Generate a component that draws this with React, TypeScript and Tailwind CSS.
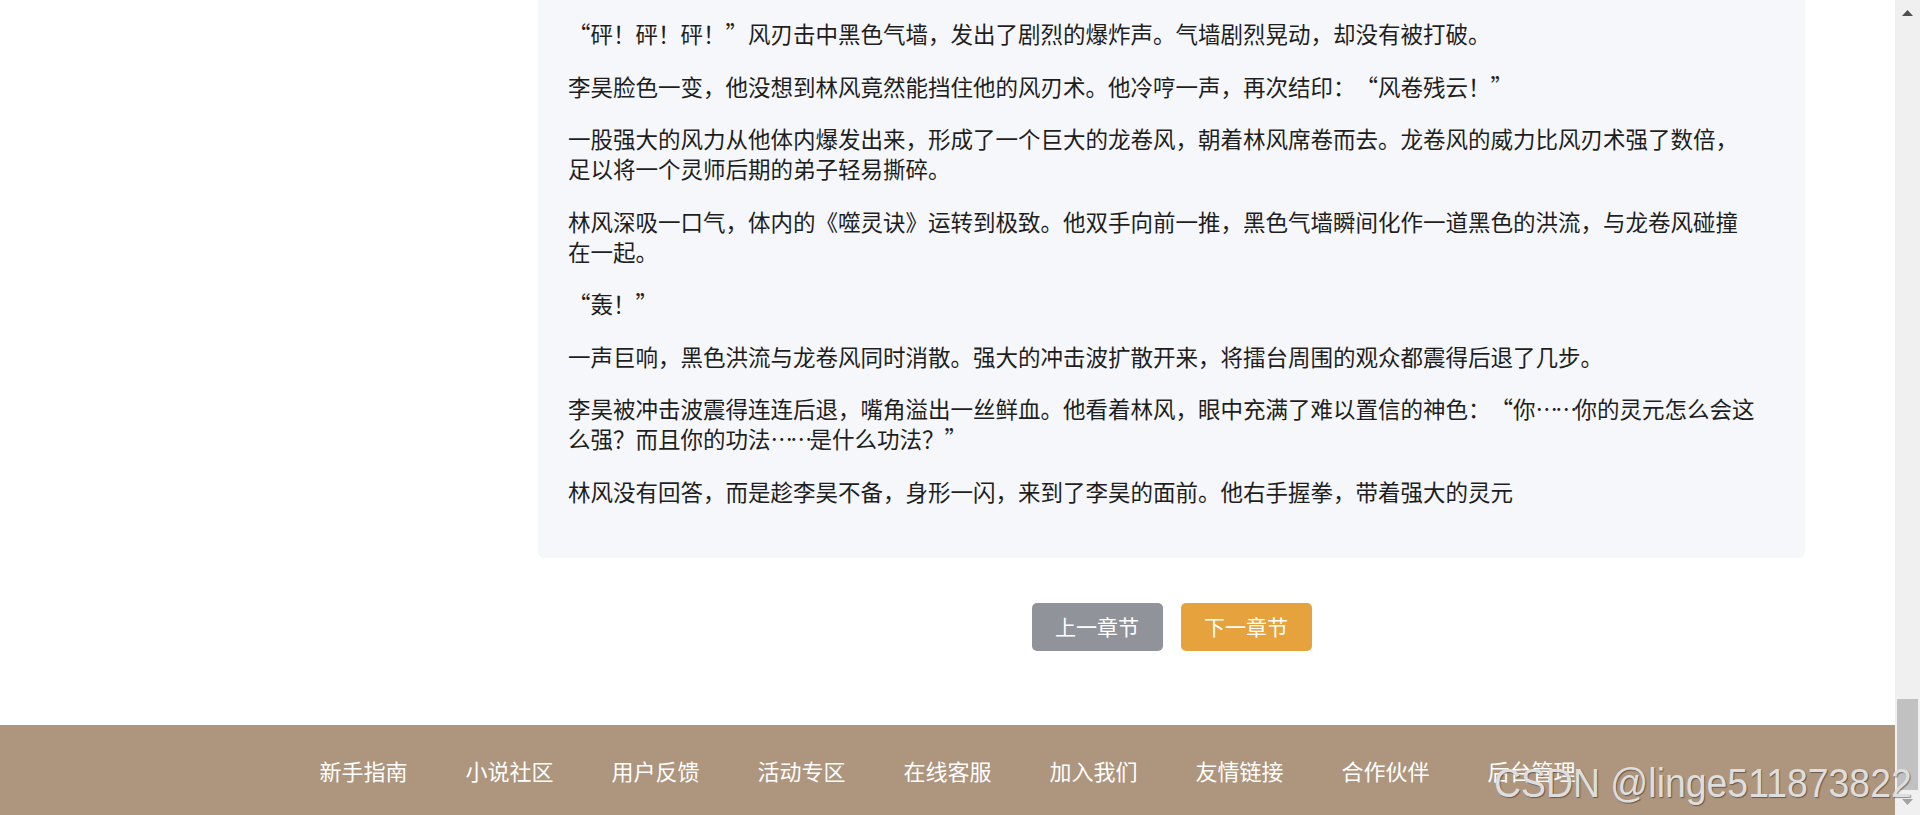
import React from "react"

// "……" is drawn a touch narrower in the original font
const Dots = () => <span className="tracking-[-3px]">……</span>

const paragraphs: React.ReactNode[] = [
  "“砰！砰！砰！”风刃击中黑色气墙，发出了剧烈的爆炸声。气墙剧烈晃动，却没有被打破。",
  "李昊脸色一变，他没想到林风竟然能挡住他的风刃术。他冷哼一声，再次结印：“风卷残云！”",
  "一股强大的风力从他体内爆发出来，形成了一个巨大的龙卷风，朝着林风席卷而去。龙卷风的威力比风刃术强了数倍，足以将一个灵师后期的弟子轻易撕碎。",
  "林风深吸一口气，体内的《噬灵诀》运转到极致。他双手向前一推，黑色气墙瞬间化作一道黑色的洪流，与龙卷风碰撞在一起。",
  "“轰！”",
  "一声巨响，黑色洪流与龙卷风同时消散。强大的冲击波扩散开来，将擂台周围的观众都震得后退了几步。",
  <>
    李昊被冲击波震得连连后退，嘴角溢出一丝鲜血。他看着林风，眼中充满了难以置信的神色：“你<Dots />
    你的灵元怎么会这么强？而且你的功法<Dots />是什么功法？”
  </>,
  "林风没有回答，而是趁李昊不备，身形一闪，来到了李昊的面前。他右手握拳，带着强大的灵元",
]

const footerLinks = [
  "新手指南",
  "小说社区",
  "用户反馈",
  "活动专区",
  "在线客服",
  "加入我们",
  "友情链接",
  "合作伙伴",
  "后台管理",
]

function Scrollbar() {
  return (
    <div className="flex w-[25px] shrink-0 flex-col bg-[#f0f0f0]">
      <div className="flex h-[25px] items-center justify-center">
        <svg width="11" height="6" viewBox="0 0 11 6">
          <polygon points="5.5,0 11,6 0,6" fill="#505050" />
        </svg>
      </div>
      <div className="flex-1" />
      <div className="mx-[2px] h-[91px] bg-[#c1c1c1]" />
      <div className="flex h-[25px] items-center justify-center pb-[2px]">
        <svg width="11" height="6" viewBox="0 0 11 6">
          <polygon points="0,0 11,0 5.5,6" fill="#a3a3a3" />
        </svg>
      </div>
    </div>
  )
}

export default function App() {
  return (
    <div className="relative flex h-[815px] overflow-hidden bg-white font-['Noto_Sans_CJK_SC','Microsoft_YaHei',sans-serif]">
      <div className="flex min-w-0 flex-1 flex-col">
        <div className="flex flex-1">
          <aside className="w-[538px] shrink-0" />
          <main className="w-[1267px] shrink-0">
            <article className="rounded-b-[6px] bg-[#f5f7fa] pb-[30px] pl-[30px] pr-[47px] pt-[18px] text-[22.5px] leading-[30px] text-[#1e1e1e] [text-spacing-trim:space-all]">
              {paragraphs.map((p, i) => (
                <p key={i} className="mb-[22.5px]">
                  {p}
                </p>
              ))}
            </article>

            <div className="mt-[45px] flex justify-center gap-[18px]">
              <button className="flex h-[48px] w-[131px] items-center justify-center rounded-[5px] bg-[#909399] text-[21px] text-white">
                上一章节
              </button>
              <button className="flex h-[48px] w-[131px] items-center justify-center rounded-[5px] bg-[#e6a23c] text-[21px] text-white">
                下一章节
              </button>
            </div>
          </main>
        </div>

        <footer className="flex h-[90px] shrink-0 items-center justify-center gap-[58px] bg-[#ae957d]">
          {footerLinks.map((link) => (
            <a key={link} href="#" className="text-[22px] text-white">
              {link}
            </a>
          ))}
        </footer>
      </div>

      <Scrollbar />

      <span className="pointer-events-none absolute left-[1494px] top-[763px] z-10 origin-left scale-x-[0.935] whitespace-nowrap font-['Liberation_Sans',sans-serif] text-[40px] leading-none text-[#dedede] [text-shadow:1px_1px_1px_rgba(0,0,0,0.4)]">
        CSDN @linge511873822
      </span>
    </div>
  )
}
